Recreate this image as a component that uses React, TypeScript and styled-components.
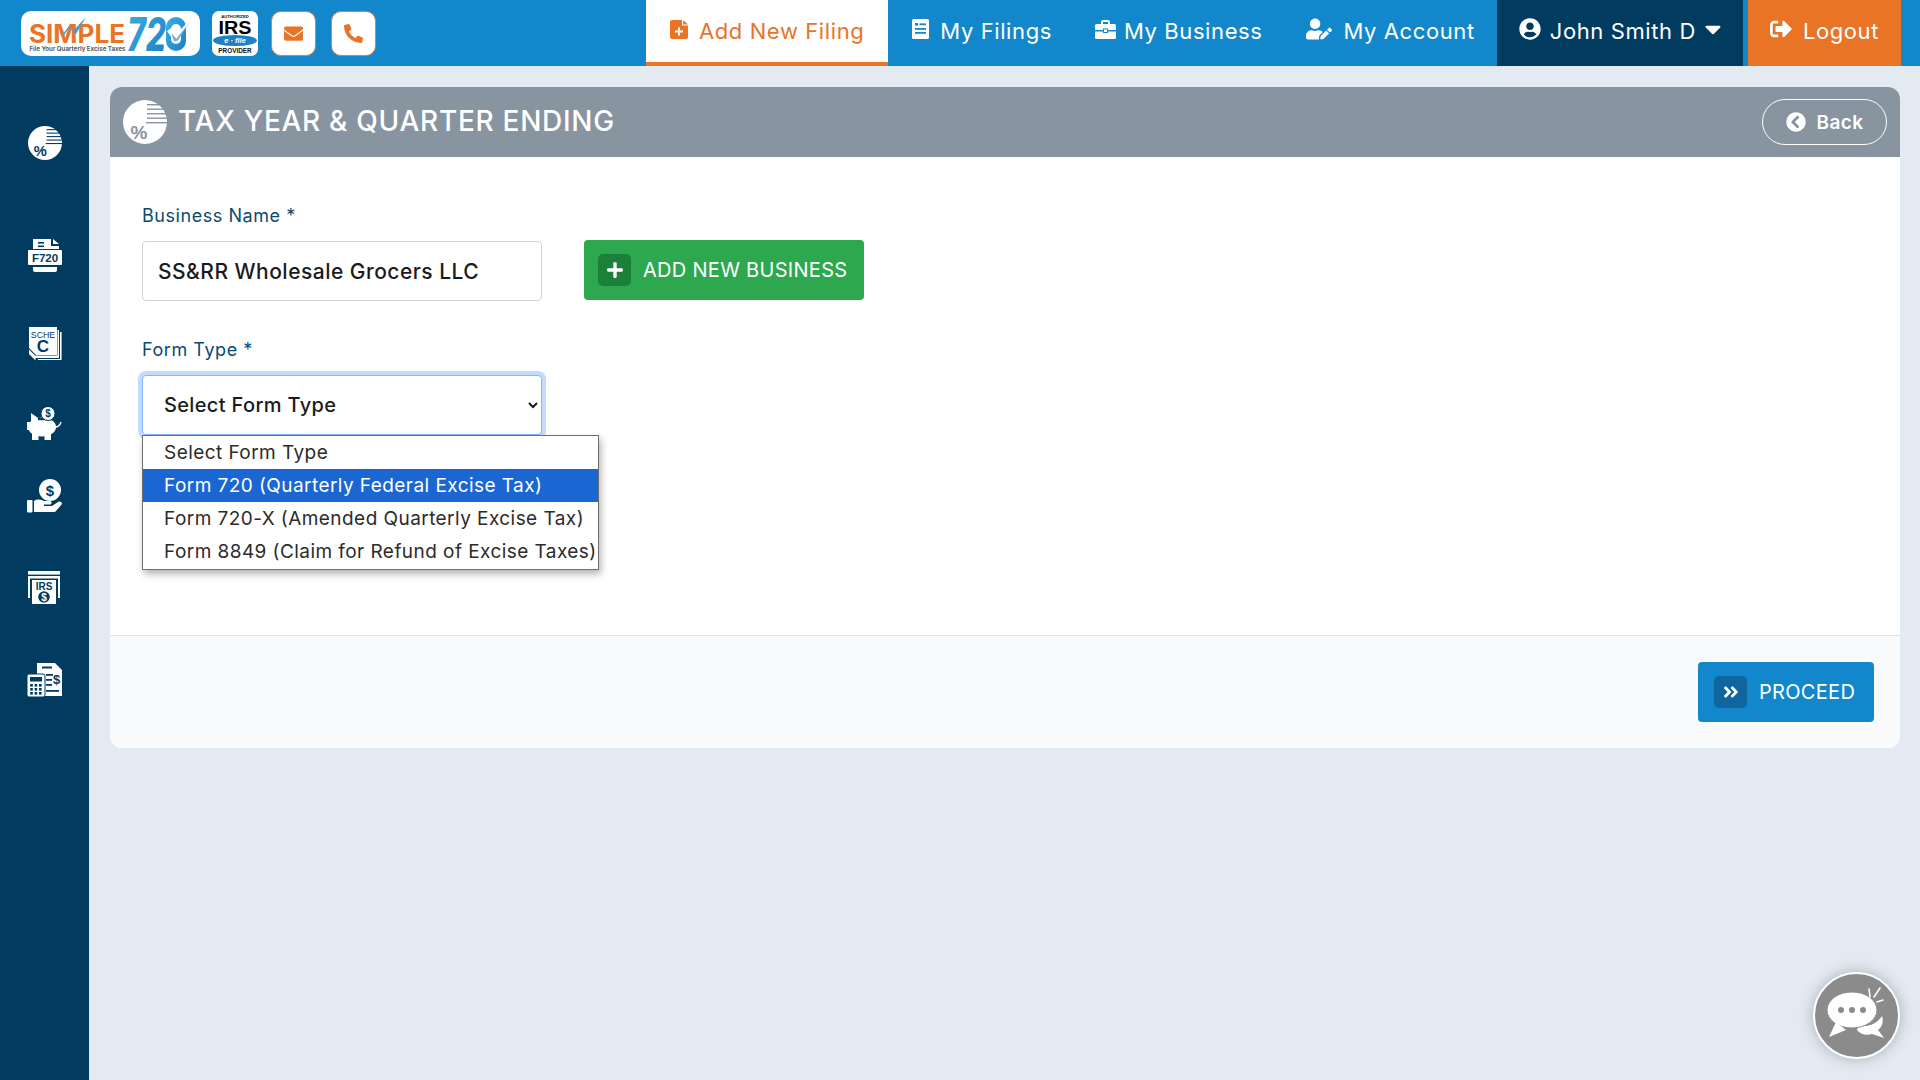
import React from "react";
import styled, { createGlobalStyle } from "styled-components";
import {
  FaEnvelope,
  FaPhoneAlt,
  FaUserEdit,
  FaUserCircle,
  FaCaretDown,
  FaSignOutAlt,
  FaChevronCircleLeft,
  FaPlus,
  FaAngleDoubleRight,
} from "react-icons/fa";

const Global = createGlobalStyle`
  html, body { margin: 0; padding: 0; background: #e3eaf1; }
  body { font-family: Inter, "Liberation Sans", sans-serif; overflow: hidden; }
  * { box-sizing: border-box; }
`;

const Page = styled.div`
  display: flex;
  flex-direction: column;
  height: 1080px;
`;

const Header = styled.header`
  display: flex;
  align-items: stretch;
  height: 66px;
  background: #1387cc;
  padding-right: 19px;
`;

const Brand = styled.div`
  display: flex;
  align-items: center;
  padding-left: 21px;
`;

const LogoBox = styled.div`
  width: 179px;
  height: 45px;
  background: #fff;
  border-radius: 10px;
  svg { display: block; overflow: visible; }
`;

const IrsBadge = styled.div`
  width: 46px;
  height: 45px;
  margin-left: 12px;
  background: #fff;
  border-radius: 7px;
  svg { display: block; }
`;

const ContactButton = styled.div<{ $gap: number }>`
  width: 45px;
  height: 45px;
  margin-left: ${(p) => p.$gap}px;
  display: flex;
  align-items: center;
  justify-content: center;
  background: #fff;
  border: 1px solid #c08a5c;
  border-radius: 10px;
  color: #e97426;
  font-size: 19px;
`;

const Nav = styled.nav`
  display: flex;
  align-items: stretch;
  margin-left: auto;
`;

const NavItem = styled.div<{ $active?: boolean; $pad?: number }>`
  display: flex;
  align-items: center;
  gap: 11px;
  padding: 0 ${(p) => p.$pad ?? 22}px;
  font-size: 22px;
  font-weight: 400;
  letter-spacing: 0.6px;
  white-space: nowrap;
  color: ${(p) => (p.$active ? "#e97426" : "#fff")};
  background: ${(p) => (p.$active ? "#fff" : "transparent")};
  border-bottom: 4px solid ${(p) => (p.$active ? "#e97426" : "transparent")};
  svg { margin-top: -4px; flex: none; }
`;

const BusinessItem = styled(NavItem)`
  gap: 8px;
  padding-left: 19px;
`;

const UserItem = styled(NavItem)`
  background: #023b60;
  border-bottom-color: #023b60;
  gap: 9px;
  padding-right: 17px;
  margin-right: 5px;
`;

const LogoutItem = styled(NavItem)`
  background: #e97426;
  border-bottom-color: #e97426;
`;

const Caret = styled(FaCaretDown)`
  margin-left: -5px;
`;

const Body = styled.div`
  display: flex;
  flex: 1;
  min-height: 0;
`;

const Sidebar = styled.aside`
  width: 89px;
  flex: none;
  display: flex;
  flex-direction: column;
  align-items: center;
  padding-left: 1px;
  background: #023b60;
`;

const SideIcon = styled.div<{ $top: number }>`
  width: 36px;
  height: 34px;
  margin-top: ${(p) => p.$top}px;
  display: flex;
  justify-content: center;
  svg { display: block; }
`;

const Main = styled.main`
  flex: 1;
  padding: 21px 20px 0 21px;
`;

const Card = styled.section`
  background: #fff;
  border-radius: 12px;
  overflow: hidden;
`;

const CardHeader = styled.div`
  height: 70px;
  display: flex;
  align-items: center;
  padding: 0 13px 0 13px;
  background: #8894a0;
  color: #fff;
`;

const TitleIcon = styled.div`
  width: 44px;
  height: 44px;
  svg { display: block; }
`;

const Title = styled.h1`
  margin: 0 0 2px 11px;
  font-size: 28px;
  font-weight: 500;
  letter-spacing: 0.72px;
`;

const BackButton = styled.div`
  margin-left: auto;
  width: 125px;
  height: 46px;
  display: flex;
  align-items: center;
  justify-content: center;
  gap: 11px;
  border: 1px solid #fff;
  border-radius: 23px;
  font-size: 19px;
  font-weight: 600;
  letter-spacing: 0.4px;
`;

const FormArea = styled.div`
  height: 478px;
  padding: 47px 32px 0;
`;

const Label = styled.label`
  display: block;
  height: 24px;
  line-height: 24px;
  font-size: 18px;
  font-weight: 400;
  letter-spacing: 0.55px;
  color: #0b4a70;
`;

const FieldRow = styled.div`
  display: flex;
  align-items: flex-start;
  margin-top: 12px;
`;

const TextInput = styled.div`
  width: 400px;
  height: 60px;
  margin-top: 1px;
  display: flex;
  align-items: center;
  padding: 0 15px;
  border: 1px solid #ced4da;
  border-radius: 4px;
  font-size: 21px;
  font-weight: 500;
  letter-spacing: 0.48px;
  color: #1b1b1b;
`;

const ActionButton = styled.div<{ $bg: string; $width: number }>`
  width: ${(p) => p.$width}px;
  height: 60px;
  display: flex;
  align-items: center;
  background: ${(p) => p.$bg};
  border-radius: 4px;
  color: #fff;
  font-size: 20px;
  font-weight: 400;
  letter-spacing: 0.3px;
  white-space: nowrap;
`;

const GreenButton = styled(ActionButton)`
  margin-left: 42px;
  padding-left: 14px;
  gap: 12px;
`;

const BlueButton = styled(ActionButton)`
  padding-left: 16px;
  gap: 12px;
`;

const ButtonGlyph = styled.span<{ $bg: string }>`
  width: 33px;
  height: 32px;
  display: flex;
  align-items: center;
  justify-content: center;
  background: ${(p) => p.$bg};
  border-radius: 5px;
  font-size: 18px;
`;

const SecondLabel = styled(Label)`
  margin-top: 37px;
`;

const SelectWrap = styled.div`
  position: relative;
  width: 400px;
  margin-top: 13px;
`;

const Select = styled.select`
  display: block;
  width: 400px;
  height: 60px;
  padding: 0 7px 0 17px;
  background: #fff;
  border: 1px solid #86b7fe;
  border-radius: 4px;
  box-shadow: 0 0 0 4px #c4dbfa;
  outline: none;
  font-family: inherit;
  font-size: 20px;
  font-weight: 450;
  letter-spacing: 0.35px;
  color: #1b1b1b;
`;

const OptionList = styled.div`
  position: absolute;
  left: 0;
  top: 60px;
  width: 457px;
  height: 135px;
  padding: 0;
  background: #fff;
  border: 1px solid #6f6f6f;
  box-shadow: 2px 4px 7px rgba(0, 0, 0, 0.3);
`;

const OptionRow = styled.div<{ $selected?: boolean }>`
  height: 33px;
  line-height: 33px;
  padding-left: 21px;
  font-size: 19px;
  letter-spacing: 0.44px;
  white-space: nowrap;
  color: ${(p) => (p.$selected ? "#fff" : "#2b2b2b")};
  background: ${(p) => (p.$selected ? "#1a66d2" : "#fff")};
`;

const CardFooter = styled.div`
  height: 113px;
  display: flex;
  justify-content: flex-end;
  padding: 26px 26px 0 0;
  background: #f8fafb;
  border-top: 1px solid #e1e4e7;
`;

const ChatBubble = styled.div`
  position: fixed;
  left: 1813px;
  top: 972px;
  width: 87px;
  height: 87px;
  border-radius: 50%;
  background: #8b8b8b;
  border: 2px solid #fff;
  box-shadow: 0 0 14px rgba(60, 70, 80, 0.35);
  svg { display: block; }
`;

const AddFileIcon = () => (
  <svg width="18" height="19" viewBox="0 0 18 19">
    <path d="M2 0h10v5.5h6V17a2 2 0 0 1-2 2H2a2 2 0 0 1-2-2V2a2 2 0 0 1 2-2z" fill="currentColor" />
    <path d="M13.2 0L18 4.4h-4.8z" fill="currentColor" />
    <path d="M8 7.5h2v3h3v2h-3v3H8v-3H5v-2h3z" fill="#fff" />
  </svg>
);

const FilingsIcon = () => (
  <svg width="17" height="20" viewBox="0 0 17 20">
    <rect width="17" height="20" rx="1.5" fill="#fff" />
    <g fill="#1387cc">
      <rect x="3" y="4" width="3" height="2.6" />
      <rect x="7.5" y="4.4" width="6.5" height="1.8" />
      <rect x="3" y="9" width="11" height="1.8" />
      <rect x="3" y="13" width="11" height="1.8" />
    </g>
  </svg>
);

const BusinessIcon = () => (
  <svg width="21" height="19" viewBox="0 0 21 19">
    <path d="M6 4V2a2 2 0 0 1 2-2h5a2 2 0 0 1 2 2v2h-2V2H8v2z" fill="#fff" />
    <path d="M0 5.5A1.5 1.5 0 0 1 1.5 4h18A1.5 1.5 0 0 1 21 5.5V10h-8V8.5H8V10H0z" fill="#fff" />
    <path d="M0 11.5h8V13h5v-1.5h8v6a1.5 1.5 0 0 1-1.5 1.5h-18A1.5 1.5 0 0 1 0 17.5z" fill="#fff" />
    <rect x="9" y="9.5" width="3" height="2.5" fill="#fff" />
  </svg>
);

const Pie = ({ bg, size }: { bg: string; size: number }) => (
  <svg width={size} height={size} viewBox="0 0 44 44">
    <circle cx="22" cy="22" r="22" fill="#fff" />
    <g fill={bg}>
      <rect x="24" y="4" width="20" height="1.4" />
      <rect x="24" y="8.5" width="20" height="1.4" />
      <rect x="24" y="13" width="20" height="1.4" />
      <rect x="24" y="17.5" width="20" height="1.4" />
      <rect x="23" y="22" width="21" height="1.4" />
    </g>
    <text x="16" y="39" fontSize="19" fontWeight="700" textAnchor="middle" fill={bg} fontFamily="Liberation Sans, sans-serif">
      %
    </text>
  </svg>
);

const PrinterIcon = () => (
  <svg width="36" height="34" viewBox="0 0 36 34">
    <path d="M6 0h18v7h8v3H6z M26 0l6 5h-6z" fill="#fff" />
    <rect x="11" y="3" width="6" height="1.6" fill="#023b60" />
    <rect x="11" y="6.5" width="6" height="1.6" fill="#023b60" />
    <rect x="1" y="11" width="34" height="15" rx="1" fill="#fff" />
    <text x="18" y="23" textAnchor="middle" fontSize="11.5" fontWeight="700" fill="#023b60" fontFamily="Liberation Sans, sans-serif">F720</text>
    <path d="M6 28h24v3a2 2 0 0 1-2 2H8a2 2 0 0 1-2-2z" fill="#fff" />
  </svg>
);

const ScheduleIcon = () => (
  <svg width="36" height="34" viewBox="0 0 36 34">
    <path d="M30.5 3H32v28H8v-2.5h22.5z" fill="#fff" />
    <path d="M33 5h1.6v28H11v-1h22z" fill="#fff" />
    <path d="M2 0h28v28H9l-7-7z" fill="#fff" />
    <path d="M2 22.5l6.5 6.5v4.5L2 27z" fill="#fff" />
    <text x="16" y="10.5" textAnchor="middle" fontSize="8.8" fill="#023b60" fontFamily="Liberation Sans, sans-serif">SCHE</text>
    <text x="16" y="25" textAnchor="middle" fontSize="17" fontWeight="700" fill="#023b60" fontFamily="Liberation Sans, sans-serif">C</text>
  </svg>
);

const PiggyIcon = () => (
  <svg width="36" height="34" viewBox="0 0 36 34">
    <ellipse cx="15" cy="20" rx="14" ry="9.5" fill="#fff" />
    <path d="M4 6l7 5-7 5zM0 15h6v8H0z" fill="#fff" />
    <rect x="5" y="25" width="6.5" height="8" fill="#fff" />
    <rect x="17.5" y="25" width="6.5" height="8" fill="#fff" />
    <path d="M28 20c3 0 5-1.5 6-5" fill="none" stroke="#fff" strokeWidth="1.3" />
    <rect x="11" y="11" width="16" height="2.2" fill="#023b60" />
    <circle cx="21" cy="6.5" r="7" fill="#fff" stroke="#023b60" strokeWidth="1" />
    <text x="21" y="10" textAnchor="middle" fontSize="10" fontWeight="700" fill="#023b60" fontFamily="Liberation Sans, sans-serif">$</text>
  </svg>
);

const HandCoinIcon = () => (
  <svg width="36" height="34" viewBox="0 0 36 34">
    <circle cx="23" cy="11" r="11" fill="#fff" />
    <text x="23" y="16.5" textAnchor="middle" fontSize="15" fontWeight="700" fill="#023b60" fontFamily="Liberation Sans, sans-serif">$</text>
    <rect x="0" y="21" width="5.5" height="12.5" rx="1" fill="#fff" />
    <path d="M7 22c4-3 8-1 10 0h6c2 0 2 3.6 0 3.6h-6v1.4h8l6-4c3-1.5 5 1 3.2 3L28 33H7z" fill="#fff" />
  </svg>
);

const IrsIcon = () => (
  <svg width="36" height="34" viewBox="0 0 36 34">
    <rect x="1" y="0" width="32" height="3.6" fill="#fff" />
    <path d="M1 5h32v22h-2V7.5H3V27H1z" fill="#fff" />
    <rect x="5" y="9" width="24" height="24" fill="#fff" />
    <text x="17" y="19" textAnchor="middle" fontSize="10" fontWeight="700" fill="#023b60" fontFamily="Liberation Sans, sans-serif">IRS</text>
    <circle cx="17" cy="26" r="5.8" fill="#023b60" />
    <text x="17" y="29.5" textAnchor="middle" fontSize="10" fontWeight="700" fill="#fff" fontFamily="Liberation Sans, sans-serif">$</text>
  </svg>
);

const CalcIcon = () => (
  <svg width="36" height="34" viewBox="0 0 36 34">
    <path d="M10 0h18l7 7v26H16V12h-6z" fill="#fff" />
    <rect x="15" y="3.5" width="10" height="2" fill="#023b60" />
    <rect x="0" y="11" width="18" height="23" rx="2" fill="#fff" stroke="#023b60" strokeWidth="1" />
    <rect x="3" y="14" width="12" height="4.5" fill="#023b60" />
    <g fill="#023b60">
      {[21, 25, 29].map((y) =>
        [3.2, 7.6, 12].map((x) => <rect key={`${x}-${y}`} x={x} y={y} width="2.6" height="2.6" />)
      )}
    </g>
    <rect x="19" y="11" width="7" height="1.8" fill="#023b60" />
    <rect x="19" y="16" width="6" height="1.8" fill="#023b60" />
    <rect x="19" y="21" width="6" height="1.8" fill="#023b60" />
    <rect x="19" y="27" width="13" height="1.8" fill="#023b60" />
    <text x="29.5" y="21" textAnchor="middle" fontSize="13" fontWeight="700" fill="#023b60" fontFamily="Liberation Sans, sans-serif">$</text>
  </svg>
);

const Logo = () => (
  <svg width="179" height="45" viewBox="0 0 179 45">
    <defs>
      <linearGradient id="sevenGrad" x1="0" y1="0" x2="1" y2="1">
        <stop offset="0" stopColor="#3bb0e6" />
        <stop offset="1" stopColor="#1a7fc4" />
      </linearGradient>
    </defs>
    <text x="8" y="32" fontSize="25" fontWeight="700" fill="#e97426" textLength="96" lengthAdjust="spacingAndGlyphs" fontFamily="Inter, sans-serif">SIMPLE</text>
    <path d="M41 24l7-9 4 5 13-14-10 17-7-6-5 7z" fill="#4a9cd3" />
    <text x="8.5" y="40" fontSize="5.6" fontWeight="700" fill="#5b5b5b" textLength="96" lengthAdjust="spacingAndGlyphs" fontFamily="Inter, sans-serif">File Your Quarterly Excise Taxes</text>
    <text x="106" y="40" fontSize="46" fontWeight="800" fontStyle="italic" fill="url(#sevenGrad)" textLength="39" lengthAdjust="spacingAndGlyphs" fontFamily="Inter, sans-serif">72</text>
    <rect x="145" y="6" width="20" height="34" rx="10" fill="url(#sevenGrad)" />
    <rect x="150" y="13" width="10" height="20" rx="5" fill="#fff" />
    <path d="M146 20l4-3 5.5 5.5L172 6l-15 23-4 1z" fill="#fff" />
    <path d="M150 22l5.5 5.5L168 12l-11 17.5-4 1z" fill="#0f6fb2" opacity="0.55" />
  </svg>
);

const IrsLogo = () => (
  <svg width="46" height="45" viewBox="0 0 46 45">
    <text x="23" y="6.5" textAnchor="middle" fontSize="4.2" fontWeight="700" fill="#111" fontFamily="Liberation Sans, sans-serif">AUTHORIZED</text>
    <text x="23" y="23" textAnchor="middle" fontSize="19" fontWeight="700" fill="#000" textLength="33" lengthAdjust="spacingAndGlyphs" fontFamily="Liberation Sans, sans-serif">IRS</text>
    <ellipse cx="23" cy="29.5" rx="22" ry="5.5" fill="#1f80c4" />
    <text x="23" y="32" textAnchor="middle" fontSize="7.5" fontWeight="700" fontStyle="italic" fill="#fff" fontFamily="Liberation Sans, sans-serif">e · file</text>
    <text x="23" y="42" textAnchor="middle" fontSize="6.4" fontWeight="700" fill="#111" fontFamily="Liberation Sans, sans-serif">PROVIDER</text>
  </svg>
);

const ChatIcon = () => (
  <svg width="83" height="83" viewBox="0 0 83 83">
    <path d="M44 50c6 4 16 2 23-8 2 6 0 11-4 14l6 8-12-4c-6 2-12 0-15-4z" fill="#fff" />
    <ellipse cx="37" cy="36" rx="25" ry="18" fill="#fff" stroke="#8b8b8b" strokeWidth="1" />
    <path d="M21 48l-7 15 17-7z" fill="#fff" />
    <circle cx="26" cy="36" r="3" fill="#8b8b8b" />
    <circle cx="37" cy="36" r="3" fill="#8b8b8b" />
    <circle cx="48" cy="36" r="3" fill="#8b8b8b" />
    <g stroke="#fff" strokeWidth="1.6" strokeLinecap="round">
      <path d="M54 15l1 8" />
      <path d="M65 14l-6 9" />
      <path d="M68 26l-6 2" />
    </g>
  </svg>
);

const sideItems = [
  { top: 60, node: <Pie bg="#023b60" size={34} /> },
  { top: 79, node: <PrinterIcon /> },
  { top: 54, node: <ScheduleIcon /> },
  { top: 46, node: <PiggyIcon /> },
  { top: 38, node: <HandCoinIcon /> },
  { top: 58, node: <IrsIcon /> },
  { top: 58, node: <CalcIcon /> },
];

const options = [
  "Select Form Type",
  "Form 720 (Quarterly Federal Excise Tax)",
  "Form 720-X (Amended Quarterly Excise Tax)",
  "Form 8849 (Claim for Refund of Excise Taxes)",
];

export default function App() {
  return (
    <Page>
      <Global />
      <Header>
        <Brand>
          <LogoBox>
            <Logo />
          </LogoBox>
          <IrsBadge>
            <IrsLogo />
          </IrsBadge>
          <ContactButton $gap={13}>
            <FaEnvelope />
          </ContactButton>
          <ContactButton $gap={15}>
            <FaPhoneAlt />
          </ContactButton>
        </Brand>
        <Nav>
          <NavItem $active $pad={24}>
            <AddFileIcon />
            Add New Filing
          </NavItem>
          <NavItem $pad={24}>
            <FilingsIcon />
            My Filings
          </NavItem>
          <BusinessItem>
            <BusinessIcon />
            My Business
          </BusinessItem>
          <NavItem>
            <FaUserEdit size={26} />
            My Account
          </NavItem>
          <UserItem>
            <FaUserCircle size={22} />
            John Smith D
            <Caret size={26} />
          </UserItem>
          <LogoutItem>
            <FaSignOutAlt size={22} />
            Logout
          </LogoutItem>
        </Nav>
      </Header>
      <Body>
        <Sidebar>
          {sideItems.map((item, i) => (
            <SideIcon key={i} $top={item.top}>
              {item.node}
            </SideIcon>
          ))}
        </Sidebar>
        <Main>
          <Card>
            <CardHeader>
              <TitleIcon>
                <Pie bg="#8894a0" size={44} />
              </TitleIcon>
              <Title>TAX YEAR &amp; QUARTER ENDING</Title>
              <BackButton>
                <FaChevronCircleLeft size={20} />
                Back
              </BackButton>
            </CardHeader>
            <FormArea>
              <Label>Business Name *</Label>
              <FieldRow>
                <TextInput>SS&amp;RR Wholesale Grocers LLC</TextInput>
                <GreenButton $bg="#2ea84f" $width={280}>
                  <ButtonGlyph $bg="#1c7f3a">
                    <FaPlus />
                  </ButtonGlyph>
                  ADD NEW BUSINESS
                </GreenButton>
              </FieldRow>
              <SecondLabel>Form Type *</SecondLabel>
              <SelectWrap>
                <Select defaultValue="" aria-label="Form Type">
                  <option value="">Select Form Type</option>
                </Select>
                <OptionList>
                  {options.map((o, i) => (
                    <OptionRow key={o} $selected={i === 1}>
                      {o}
                    </OptionRow>
                  ))}
                </OptionList>
              </SelectWrap>
            </FormArea>
            <CardFooter>
              <BlueButton $bg="#1387cc" $width={176}>
                <ButtonGlyph $bg="#0f659e">
                  <FaAngleDoubleRight />
                </ButtonGlyph>
                PROCEED
              </BlueButton>
            </CardFooter>
          </Card>
        </Main>
      </Body>
      <ChatBubble>
        <ChatIcon />
      </ChatBubble>
    </Page>
  );
}
